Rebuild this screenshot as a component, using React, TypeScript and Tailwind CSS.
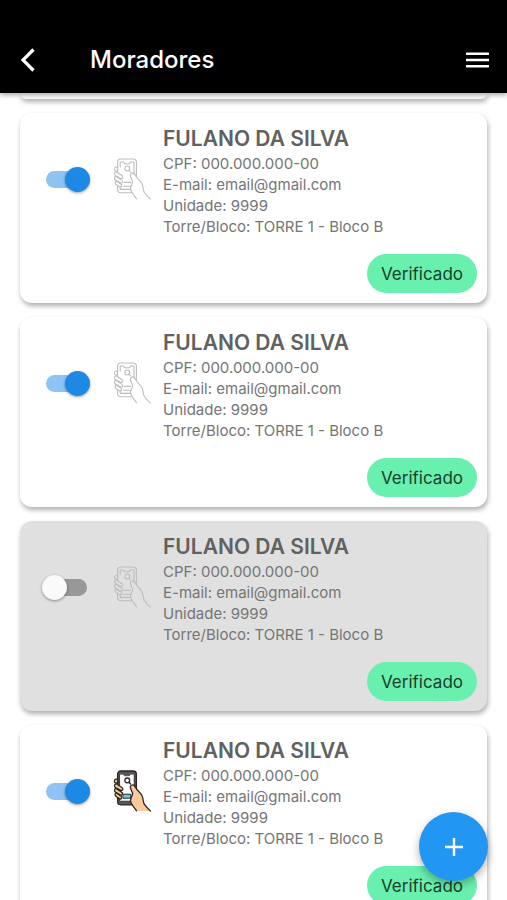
import { useState } from "react";

type Resident = {
  id: number;
  name: string;
  cpf: string;
  email: string;
  unit: string;
  block: string;
  active: boolean;
  hasApp: boolean;
};

const base = {
  name: "FULANO DA SILVA",
  cpf: "000.000.000-00",
  email: "email@gmail.com",
  unit: "9999",
  block: "TORRE 1 - Bloco B",
};

const initialResidents: Resident[] = [
  { id: 1, ...base, active: true, hasApp: false },
  { id: 2, ...base, active: true, hasApp: false },
  { id: 3, ...base, active: false, hasApp: false },
  { id: 4, ...base, active: true, hasApp: true },
];

const HAND =
  "M37.500 41c-2.400-1.800-4.400-4-6.200-6.800-1.300-2.300-1-4.900-2-7.800-.9-2.800-3.800-4.800-5.800-7.400l-2-3.200c-1.600-1.900-5-.3-4 2.400l2.200 5.400c-.4 2.800-2 4-2.200 7 0 3.600 3.600 6.200 6 10.200";

function PhoneInHand({ colored }: { colored: boolean }) {
  const line = colored ? "#2b2528" : "#bdbdbd";
  const finger = colored ? "#f3cf86" : "none";
  const w = colored ? 1.3 : 1.1;
  return (
    <svg viewBox="0 0 39 42" className="h-[42px] w-[39px] shrink-0" fill="none" aria-hidden="true">
      <g stroke={line} strokeWidth={w} strokeLinecap="round" strokeLinejoin="round">
        {colored ? (
          <>
            <path
              d="M4.6 4.2C4.6 2.2 5.8 1 7.8 1h12.400c2 0 3.200 1.200 3.200 3.200V34.800H7.800c-2 0-3.200-1.200-3.200-3.200z"
              fill="#5a5557"
            />
            <path d="M7 4.200h3.400l1 1.600h5l1-1.600H21v26.800H7z" fill="#ffffff" strokeWidth="0.5" />
          </>
        ) : (
          <>
            <path d="M4.600 9V4.200c0-2 1.200-3.200 3.200-3.200h12.400c2 0 3.200 1.200 3.200 3.200v14.300M18.600 34.800H7.800c-2 0-3.200-1.200-3.200-3.200V28" />
            <path d="M7.200 9V4h3.400l1 1.700h4.800l1-1.700H21v12M7.200 28.500V31.400h10.400" />
          </>
        )}
        <circle cx="14.300" cy="10.400" r="2.400" />
        <path d="M16 12.200l1.600 1.800" />
        {colored ? (
          <rect x="10.400" y="24.200" width="7.400" height="4" fill="#5fd3dc" strokeWidth="1" />
        ) : (
          <path d="M11 24.400h6.600M10.600 28.200h7" />
        )}
        <path d="M4.600 9.200H2.800c-1.900.2-1.900 3.400 0 3.800l1.800.4z" fill={finger} />
        <path d="M3.200 13.800c-2 0-2.300 3-.5 3.900l5 2.700c2 .6 2.900-1.900 1.200-2.900z" fill={finger} />
        <path d="M3 18.400c-1.900.3-2 3.100-.2 3.900l4.600 2.700c2 .6 2.900-1.900 1.200-2.900z" fill={finger} />
        <path d="M3.200 23c-1.600.5-1.500 2.900.2 3.700l3.400 2.200c2 .6 2.700-1.800 1-2.900z" fill={finger} />
        {colored && <path d={HAND} fill="#fbc99a" stroke="none" />}
        <path d={HAND} />
      </g>
    </svg>
  );
}

function ResidentCard({ resident, onToggle }: { resident: Resident; onToggle: () => void }) {
  return (
    <li
      className={`rounded-xl px-[10px] pb-[10px] pt-3 shadow-[1px_3px_5px_rgba(0,0,0,0.32)] ${
        resident.active ? "bg-white" : "bg-[#e0e0e0]"
      }`}
    >
      <div className="flex items-center pl-4">
        <div className="flex items-center pb-1">
          <input
            type="checkbox"
            role="switch"
            aria-label={`Ativar ${resident.name}`}
            checked={resident.active}
            onChange={onToggle}
            className="relative h-[17px] w-[41px] shrink-0 cursor-pointer appearance-none rounded-full bg-[#989898] before:absolute before:-left-1 before:-top-1 before:size-[25px] before:rounded-full before:bg-[#fafafa] before:shadow-[0_1px_3px_rgba(0,0,0,0.4)] checked:bg-[#8ec3f3] checked:before:left-[19px] checked:before:bg-[#1e88e5]"
          />
          <div className="ml-[26px] mr-[11px]">
            <PhoneInHand colored={resident.hasApp} />
          </div>
        </div>
        <div className="min-w-0 text-[15px] leading-[21px] text-[#757575]">
          <h2 className="text-[21px] font-semibold leading-7 text-[#616161]">{resident.name}</h2>
          <p>CPF: {resident.cpf}</p>
          <p>E-mail: {resident.email}</p>
          <p>Unidade: {resident.unit}</p>
          <p>Torre/Bloco: {resident.block}</p>
        </div>
      </div>
      <div className="mt-[17px] flex justify-end">
        <span className="flex h-[39px] items-center rounded-full bg-[#69f0ae] px-[14px] text-[17px] leading-6 text-[#16402c]">
          Verificado
        </span>
      </div>
    </li>
  );
}

export default function App() {
  const [residents, setResidents] = useState(initialResidents);

  const toggle = (id: number) =>
    setResidents((all) => all.map((r) => (r.id === id ? { ...r, active: !r.active } : r)));

  return (
    <div className="relative flex h-screen flex-col overflow-hidden bg-white font-['Inter',sans-serif]">
      <header className="z-10 shrink-0 bg-black pt-[26px] text-white shadow-[0_2px_5px_rgba(0,0,0,0.35)]">
        <div className="flex h-[67px] items-center px-[18px]">
          <button type="button" aria-label="Voltar" className="flex w-[72px] cursor-pointer">
            <svg viewBox="0 0 20 24" className="h-6 w-5" fill="none" stroke="currentColor" strokeWidth="3.2">
              <path d="M15.500 1.500L5 12l10.500 10.500" />
            </svg>
          </button>
          <h1 className="flex-1 text-2xl font-medium">Moradores</h1>
          <button type="button" aria-label="Abrir menu" className="cursor-pointer">
            <svg viewBox="0 0 23 16" className="h-4 w-[23px]" fill="currentColor">
              <path d="M0 .5h23V3H0zM0 6.800h23v2.500H0zM0 13h23v2.500H0z" />
            </svg>
          </button>
        </div>
      </header>

      <main className="min-h-0 flex-1 overflow-y-auto [scrollbar-width:none]">
        <ul className="flex flex-col gap-[14px] px-5 pb-5">
          {/* Lower edge of the card above, tucked under the app bar */}
          <li aria-hidden="true" className="h-[6px] rounded-b-xl bg-white shadow-[1px_3px_5px_rgba(0,0,0,0.32)]" />
          {residents.map((r) => (
            <ResidentCard key={r.id} resident={r} onToggle={() => toggle(r.id)} />
          ))}
        </ul>
      </main>

      <button
        type="button"
        aria-label="Adicionar morador"
        className="absolute bottom-[19px] right-[19px] z-10 flex size-[69px] cursor-pointer items-center justify-center rounded-full bg-[#2196f3] text-white shadow-[0_4px_8px_rgba(0,0,0,0.3)]"
      >
        <svg viewBox="0 0 18 18" className="size-[18px]" fill="none" stroke="currentColor" strokeWidth="2.4">
          <path d="M9 0v18M0 9h18" />
        </svg>
      </button>
    </div>
  );
}
